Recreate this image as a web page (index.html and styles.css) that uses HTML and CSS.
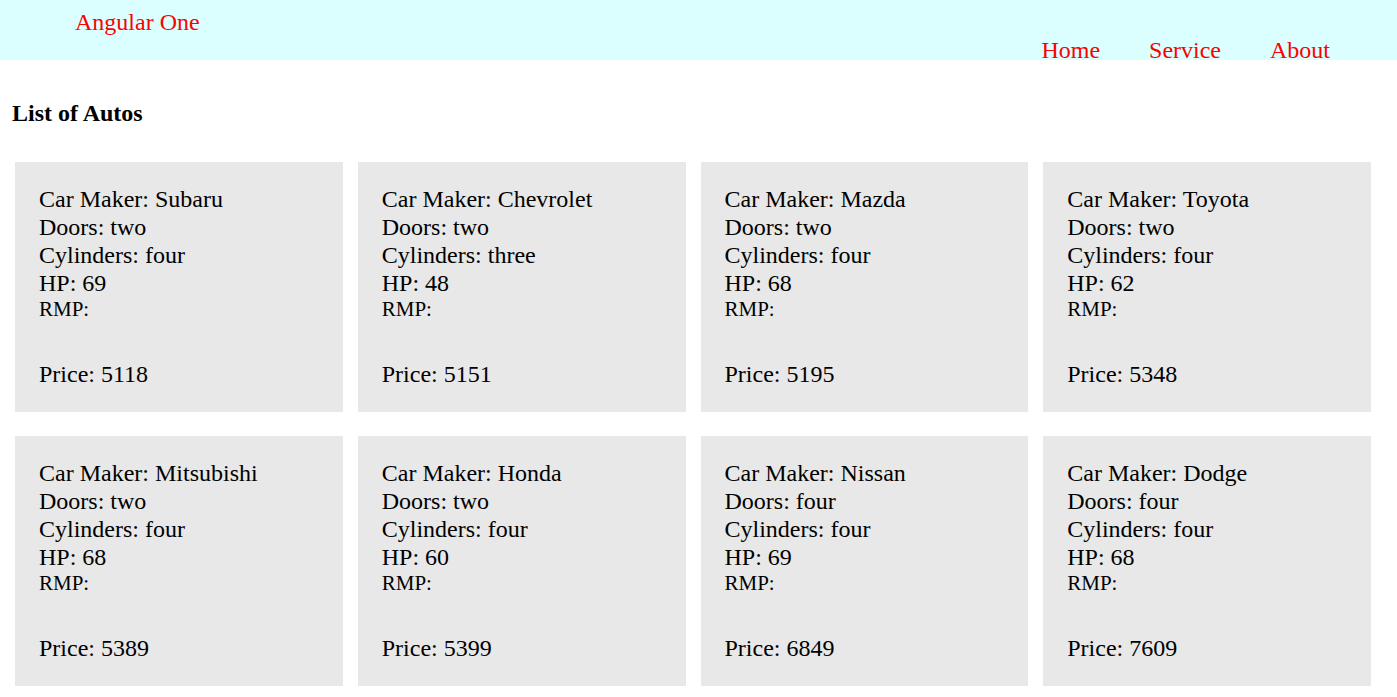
FILE: index.html
```html
<!DOCTYPE html>
<html>
<head>
<meta charset="utf-8">
<title>Angular One</title>
<link rel="stylesheet" href="styles.css">
</head>
<body>
<header class="topbar">
  <div class="brand">Angular One</div>
  <nav class="nav">
    <a class="nav-link" href="#">Home</a>
    <a class="nav-link" href="#">Service</a>
    <a class="nav-link" href="#">About</a>
  </nav>
</header>
<main class="content">
  <h2 class="title">List of Autos</h2>
  <div class="grid">
    <div class="card">
      <div class="line">Car Maker: Subaru</div>
      <div class="line">Doors: two</div>
      <div class="line">Cylinders: four</div>
      <div class="line">HP: 69</div>
      <div class="rmp">RMP:</div>
      <div class="line">Price: 5118</div>
    </div>
    <div class="card">
      <div class="line">Car Maker: Chevrolet</div>
      <div class="line">Doors: two</div>
      <div class="line">Cylinders: three</div>
      <div class="line">HP: 48</div>
      <div class="rmp">RMP:</div>
      <div class="line">Price: 5151</div>
    </div>
    <div class="card">
      <div class="line">Car Maker: Mazda</div>
      <div class="line">Doors: two</div>
      <div class="line">Cylinders: four</div>
      <div class="line">HP: 68</div>
      <div class="rmp">RMP:</div>
      <div class="line">Price: 5195</div>
    </div>
    <div class="card">
      <div class="line">Car Maker: Toyota</div>
      <div class="line">Doors: two</div>
      <div class="line">Cylinders: four</div>
      <div class="line">HP: 62</div>
      <div class="rmp">RMP:</div>
      <div class="line">Price: 5348</div>
    </div>
    <div class="card">
      <div class="line">Car Maker: Mitsubishi</div>
      <div class="line">Doors: two</div>
      <div class="line">Cylinders: four</div>
      <div class="line">HP: 68</div>
      <div class="rmp">RMP:</div>
      <div class="line">Price: 5389</div>
    </div>
    <div class="card">
      <div class="line">Car Maker: Honda</div>
      <div class="line">Doors: two</div>
      <div class="line">Cylinders: four</div>
      <div class="line">HP: 60</div>
      <div class="rmp">RMP:</div>
      <div class="line">Price: 5399</div>
    </div>
    <div class="card">
      <div class="line">Car Maker: Nissan</div>
      <div class="line">Doors: four</div>
      <div class="line">Cylinders: four</div>
      <div class="line">HP: 69</div>
      <div class="rmp">RMP:</div>
      <div class="line">Price: 6849</div>
    </div>
    <div class="card">
      <div class="line">Car Maker: Dodge</div>
      <div class="line">Doors: four</div>
      <div class="line">Cylinders: four</div>
      <div class="line">HP: 68</div>
      <div class="rmp">RMP:</div>
      <div class="line">Price: 7609</div>
    </div>
  </div>
</main>
</body>
</html>
```
FILE: styles.css
```css
html, body {
  margin: 0;
  padding: 0;
  background: #ffffff;
  font-family: "Liberation Serif", "Times New Roman", serif;
  color: #000000;
}

.topbar {
  height: 60px;
  background: #dbffff;
  display: flex;
  justify-content: space-between;
  align-items: flex-start;
  padding: 0 67px 0 75px;
  box-sizing: border-box;
}

.brand {
  color: #ff0000;
  font-size: 24px;
  line-height: 27.6px;
  margin-top: 9px;
}

.nav {
  display: flex;
  gap: 49px;
  margin-top: 37px;
}

.nav-link {
  color: #ff0000;
  font-size: 24px;
  line-height: 27.6px;
  text-decoration: none;
}

.content {
  padding: 0 0 0 15px;
}

.title {
  margin: 40px 0 34px -3px;
  font-size: 24px;
  line-height: 27.6px;
  font-weight: bold;
}

.grid {
  display: grid;
  grid-template-columns: repeat(4, 327.75px);
  column-gap: 15px;
  row-gap: 24px;
}

.card {
  background: #e8e8e8;
  height: 250px;
  box-sizing: border-box;
  padding: 23px 24px 0 24px;
}

.line {
  font-size: 24px;
  line-height: 28px;
}

.rmp {
  font-size: 21px;
  line-height: 24px;
  margin-bottom: 39px;
}
```
